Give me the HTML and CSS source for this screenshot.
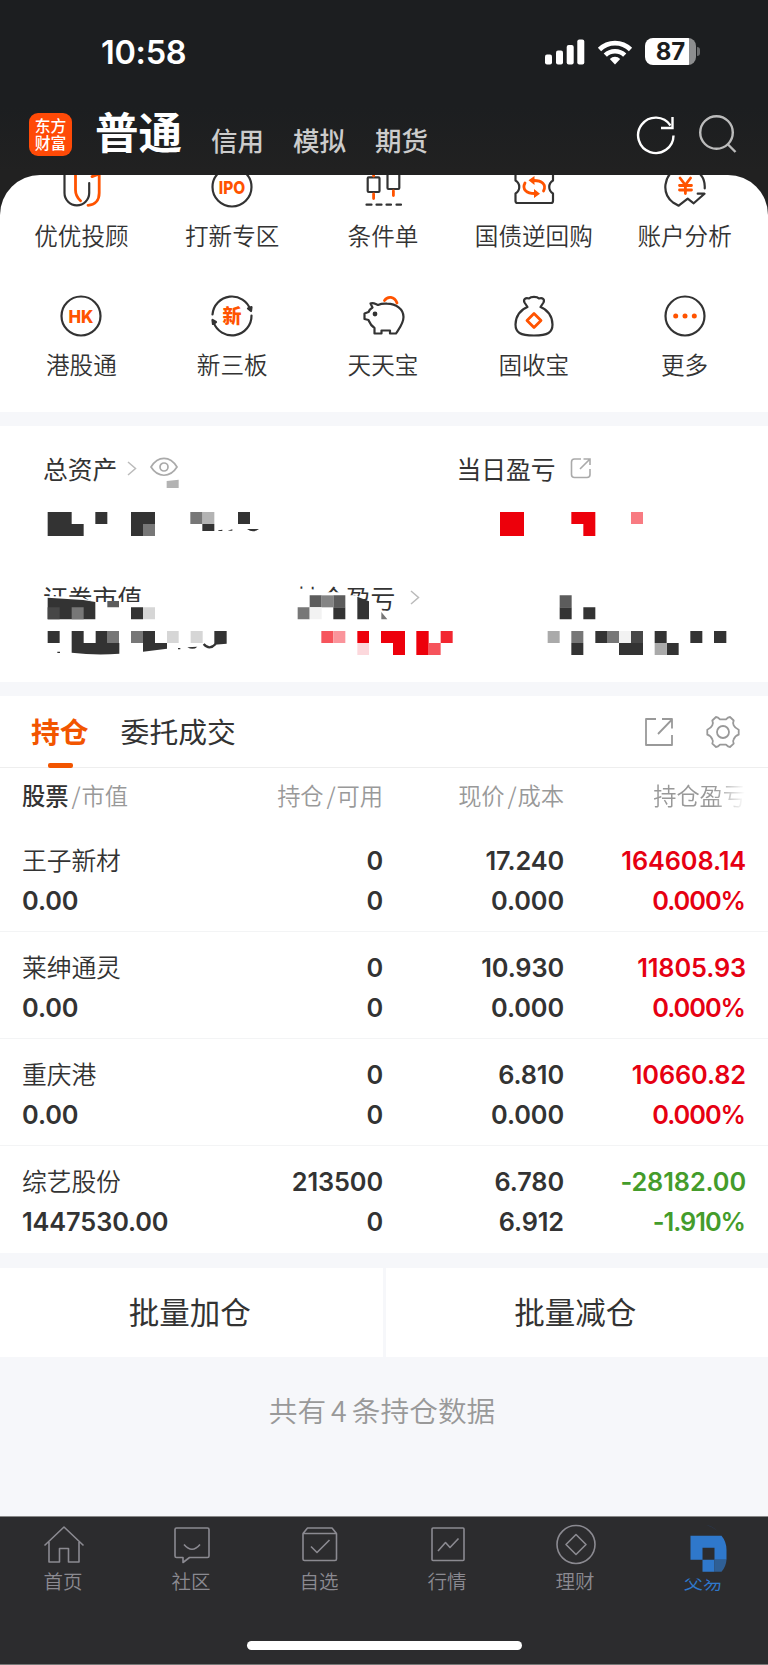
FILE: index.html
```html
<!DOCTYPE html>
<html lang="zh-CN">
<head>
    <meta charset="UTF-8">
    <title>交易</title>
    <link rel="stylesheet" href="styles.css">
</head>
<body>
<div id="app">
    <header>
        <div class="status">
            <span class="time">10:58</span>
            <svg class="signal" width="40" height="26" viewBox="0 0 40 26">
                <rect x="0" y="15.500" width="7" height="10" rx="2"/>
                <rect x="11" y="11.500" width="7" height="14" rx="2"/>
                <rect x="21.700" y="6" width="7" height="19.500" rx="2"/>
                <rect x="32.300" y="0.500" width="7" height="25" rx="2"/>
            </svg>
            <svg class="wifi" width="36" height="26" viewBox="0 0 36 26" stroke="#fff" stroke-width="4.600">
                <path d="M2.500 10.500a22 22 0 0 1 31 0"/>
                <path d="M8.300 16.200a13.800 13.800 0 0 1 19.400 0"/>
                <path d="M18 25.500l-5.200-5.600a7.500 7.500 0 0 1 10.400 0z" fill="#fff" stroke="none"/>
            </svg>
            <div class="battery"><span>87</span></div>
        </div>
        <div class="nav">
            <div class="logo"><span>东方</span><span>财富</span></div>
            <h1>普通</h1>
            <a>信用</a>
            <a>模拟</a>
            <a>期货</a>
            <svg class="refresh" width="42" height="42" viewBox="0 0 42 42" stroke="#fff" stroke-width="2.400">
                <path d="M38.500 22.500A17.700 17.700 0 1 1 35.500 12.500"/>
                <path d="M37.500 4v11H26"/>
            </svg>
            <svg class="search" width="42" height="42" viewBox="0 0 42 42" stroke="#bbb" stroke-width="2.400">
                <circle cx="19.500" cy="19.500" r="16.300"/>
                <path d="M30.500 31l8 8"/>
            </svg>
        </div>
    </header>

    <section class="menu">
        <div class="item">
            <svg viewBox="0 0 44 44">
                <path d="M5.500 0v28a12.300 12.300 0 0 0 24.700 0V18"/>
                <path class="o" d="M16.500 0v25c0 5 2 8 5 10.700M33 11.600l7.200-2.600v19c0 7-4 12-11.200 12.300"/>
            </svg>
            <p>优优投顾</p>
        </div>
        <div class="item">
            <svg viewBox="0 0 44 44">
                <circle cx="22" cy="22" r="19.500"/>
                <text x="22" y="28.600" font-size="18" textLength="26.500" lengthAdjust="spacingAndGlyphs">IPO</text>
            </svg>
            <p>打新专区</p>
        </div>
        <div class="item">
            <svg viewBox="0 0 44 44">
                <rect x="6.700" y="12.300" width="11.800" height="14.700" rx="1"/>
                <rect x="26.500" y="5" width="11.800" height="19" rx="1"/>
                <path d="M5.500 39.700h5M15.500 39.700h5M25.500 39.700h4.500M35.500 39.700h4.500"/>
                <path class="o" d="M12.600 8v3M12.600 29v4.500M32.400 26v4.500"/>
            </svg>
            <p>条件单</p>
        </div>
        <div class="item">
            <svg viewBox="0 0 44 44">
                <path d="M3.500 0v15.500c5 3 5 10 0 13V36q0 2 2 2h33.500q2 0 2-2v-7.500c-5-3-5-10 0-13V0"/>
                <path class="o" d="M13 18c-3.500 6.500 2 10.500 9.500 10.500M31.500 26c3.500-6.500-2-10.500-9.500-10.500"/>
                <path class="of" d="M22.500 11v9l-6-4.800zM22 24v9l6-4.300z"/>
            </svg>
            <p>国债逆回购</p>
        </div>
        <div class="item">
            <svg viewBox="0 0 44 44">
                <path d="M41.700 23.300A19.700 19.700 0 1 0 10 37.500L15.700 40.700 24.700 33.700 30.700 38.300 41.500 28.700H34.700"/>
                <path class="o" d="M17 13l5.300 7 5.300-7M16.500 20.500h12M16.500 25h12M22.400 20v8.500"/>
            </svg>
            <p>账户分析</p>
        </div>
        <div class="item">
            <svg viewBox="0 0 44 44">
                <circle cx="22" cy="22" r="19.500"/>
                <text x="22" y="28.500" font-size="18" textLength="25" lengthAdjust="spacingAndGlyphs">HK</text>
            </svg>
            <p>港股通</p>
        </div>
        <div class="item">
            <svg viewBox="0 0 44 44">
                <path d="M2.500 20.500A19.500 19.500 0 0 1 40.500 16M41.500 21.500A19.500 19.500 0 0 1 3.500 28"/>
                <path class="d" d="M38 14.500l3 2.500 .500-4zM2.500 26l.5 4 3-2z"/>
                <text x="22" y="28.800" font-size="19">新</text>
            </svg>
            <p>新三板</p>
        </div>
        <div class="item">
            <svg viewBox="0 0 44 44">
                <path d="M9.500 9.500c2.500-1.500 5 .5 7.500 1.500 3-1.300 6-1.600 9-1.300 9 .3 16.500 5 16.500 13.300 0 6.500-4 11-7.500 16.500h-6v-3H20.500v3h-7V34C9.500 31.500 9 29.500 7.500 26L3.500 25v-5.500L7.500 18c.8-2 1.700-3 4-4.500z"/>
                <circle class="d" cx="14" cy="20" r="1.300"/>
                <path class="o" d="M23.500 6.500c3-4.500 10-4.500 12.500 2.500"/>
            </svg>
            <p>天天宝</p>
        </div>
        <div class="item">
            <svg viewBox="0 0 44 44">
                <path d="M15.500 13L12.500 8.500C11 5 13.500 3.500 17 4.500c2-2.200 8-2.200 10 0 3.500-1 6 .5 4.500 4L28.500 13c7 2.500 12 9.500 12 17.500 0 8-4.500 11-18.500 11S3.500 38.500 3.500 30.500c0-8 5-15 12-17.500z"/>
                <path class="o" d="M22 19.500l7 7-7 7-7-7z"/>
            </svg>
            <p>固收宝</p>
        </div>
        <div class="item">
            <svg viewBox="0 0 44 44">
                <circle cx="22" cy="22" r="19.500"/>
                <g class="of"><circle cx="12.700" cy="22" r="2.500"/><circle cx="22" cy="22" r="2.500"/><circle cx="31.300" cy="22" r="2.500"/></g>
            </svg>
            <p>更多</p>
        </div>
    </section>

    <section class="assets">
        <div class="line top">
            <span>总资产</span>
            <svg class="arrow" width="10" height="15" viewBox="0 0 10 15"><path d="M1 1l7.500 6.500L1 14"/></svg>
            <svg class="eye" width="28" height="20" viewBox="0 0 28 20">
                <path d="M1 10C8-1.500 20-1.500 27 10 20 21 8 21 1 10z"/>
                <circle cx="14" cy="10" r="4"/>
            </svg>
            <span class="today">当日盈亏</span>
            <svg class="share" width="22" height="22" viewBox="0 0 22 22">
                <path d="M11 2H4.500Q1.500 2 1.500 5v12.500q0 3 3 3h12.500q3 0 3-3V12M10 12L20 2M13.500 2H20v6"/>
            </svg>
        </div>
        <div class="line bottom">
            <span>证券市值</span>
            <span class="hold">持仓盈亏</span>
            <svg class="arrow" width="10" height="15" viewBox="0 0 10 15"><path d="M1 1l7.500 6.500L1 14"/></svg>
        </div>
        <!-- 金额打码 -->
        <svg class="mosaic" width="768" height="250" viewBox="0 0 2304 750">
            <g fill="#fff">
                <path d="M130 498l110 3 45 15h150v70H130z"/>
                <path d="M840 476h80l60 6v5h55l10 9h25l30 20h30v60H840z"/>
                <path d="M1085 510l55 42v30h-55z"/>
            </g>
            <path fill="#b3b3b3" d="M500 153l36-4v25h-36zM607 246h36v36h-36z"/>
            <g fill="#333">
                <path d="M143 246h72v36h36v36H143zM286 246h36v36h-36zM393 246h72v36h-36v36h-36zM607 282h36v21h-36zM714 246h36v36h-36z"/>
                <path d="M655 301l12-2v4h-12zM683 302l14-4v4zM741 297h36q-18 14-36 0z"/>
                <path d="M143 503l107 7 36 6v52H143zM393 532h36v36h-36zM143 603h36v36h-36zM215 603h36v36h36v-36h36v36h35v32q-70 6-143-3zM429 603h36v36h36v17l-72 9zM643 603h37v38l-37 3zM172 665h8v4h-8zM534 654h7v4h-7zM562 652l30-2q-12 12-30 2z"/>
                <path d="M1000 532h36v36h-36zM1072 500l35 14v54h-35z"/>
                <path d="M1679 532h36v36h-36zM1750 532h36v36h-36zM1714 639h36v36h-36zM1786 603h36v36h-36zM1857 639h72v36h-72zM1964 603h36v36h36v36h-36v-36h-36zM2071 603h36v36h-36zM2142 603h37v36h-37z"/>
            </g>
            <path d="M611 642q17 20 36 0" fill="none" stroke="#333" stroke-width="7"/>
            <path fill="#777" d="M429 282h36v36h-36zM571 246h36v36h-36zM215 532h36v36h-36zM322 603h35v36h-35zM393 603h36v36h-36zM893 532h36v36h-36zM1144 546l18 22h-18zM1714 603h36v36h-36zM1821 603h36v36h-36z"/>
            <path fill="#5c5c5c" d="M322 513h35v19h-35zM929 496h36v36h-36zM1000 496h36v36h-36zM1679 496h36v36h-36z"/>
            <path fill="#848484" d="M965 496h35v36h-35z"/>
            <path fill="#474747" d="M143 532h36v36h-36zM1893 603h36v36h-36z"/>
            <path fill="#d6d6d6" d="M429 532h36v36h-36zM501 603h35v36h-35zM572 603h36v36h-36z"/>
            <path fill="#aaa" d="M1643 603h36v36h-36zM1964 639h36v36h-36z"/>
            <path fill="#f2f2f2" d="M929 532h36v36h-36zM1857 603h36v36h-36z"/>
            <path fill="#ed000b" d="M1500 246h72v72h-72zM1714 246h72v72h-36v-36h-36zM1072 603h35v36h-35zM1143 603h72v72h-36v-36h-36zM1249 603h37v72h-37z"/>
            <path fill="#f6545c" d="M964 603h36v36h-36zM1286 639h36v36h-36z"/>
            <path fill="#f22630" d="M1322 603h36v36h-36z"/>
            <path fill="#f87b82" d="M1893 246h36v36h-36z"/>
            <path fill="#fa949b" d="M1000 603h36v36h-36z"/>
            <path fill="#fcd8dc" d="M1072 639h35v36h-35z"/>
        </svg>
    </section>

    <section class="stocks">
        <div class="tabs">
            <span class="active">持仓</span>
            <span>委托成交</span>
            <svg class="export" width="30" height="30" viewBox="0 0 30 30">
                <path d="M12 2H2v26h26V18M14 17L28 2.500M18 2h10v9.500"/>
            </svg>
            <svg class="gear" width="34" height="34" viewBox="0 0 34 34">
                <path d="M10 2Q12 2 14 4.300H20Q22 2 24 2L27.700 5.500Q26.500 8 27.700 10.300 29 13 32.700 14.700V19.700Q29 21 27.700 24.300 26.500 26 27.700 28.700L24 32Q22 32 20 29.700H14Q12 32 10 32L6.300 28.700Q7.500 26 6.300 24.300 5 21 1.300 19.700V14.700Q5 13 6.300 10.300 7.500 8 6.300 5.500z"/>
                <circle cx="17" cy="17" r="6"/>
            </svg>
        </div>
        <div class="row head">
            <span><b>股票</b><i>/</i>市值</span>
            <span>持仓<i>/</i>可用</span>
            <span>现价<i>/</i>成本</span>
            <span class="fade">持仓盈亏</span>
        </div>
        <div class="row">
            <span class="name">王子新材</span><span>0</span><span>17.240</span><span class="red">164608.14</span>
            <span>0.00</span><span>0</span><span>0.000</span><span class="red pct">0.000%</span>
        </div>
        <div class="row">
            <span class="name">莱绅通灵</span><span>0</span><span>10.930</span><span class="red">11805.93</span>
            <span>0.00</span><span>0</span><span>0.000</span><span class="red pct">0.000%</span>
        </div>
        <div class="row">
            <span class="name">重庆港</span><span>0</span><span>6.810</span><span class="red">10660.82</span>
            <span>0.00</span><span>0</span><span>0.000</span><span class="red pct">0.000%</span>
        </div>
        <div class="row">
            <span class="name">综艺股份</span><span>213500</span><span>6.780</span><span class="green">-28182.00</span>
            <span>1447530.00</span><span>0</span><span>6.912</span><span class="green pct">-1.910%</span>
        </div>
    </section>

    <div class="batch">
        <div>批量加仓</div>
        <div>批量减仓</div>
    </div>
    <p class="total">共有<span>4</span>条持仓数据</p>

    <footer>
        <ul>
            <li>
                <svg viewBox="0 0 44 44"><path d="M2.500 22.500L22 4l19.500 18.500M7 19v20h10.500V25.500h9V39H37V19"/></svg>
                <span>首页</span>
            </li>
            <li>
                <svg viewBox="0 0 44 44"><path d="M6.500 5h31q1.500 0 1.500 1.500V33q0 1.500-1.500 1.500H19.500L13 39.500v-5H6.500Q5 34.500 5 33V6.500Q5 5 6.500 5zM14 21.500q8 9.500 16 0"/></svg>
                <span>社区</span>
            </li>
            <li>
                <svg viewBox="0 0 44 44"><path d="M5 10.500h33.500V36q0 1.500-1.500 1.500H6.500Q5 37.500 5 36zL9.500 5H34l4.500 5.500M13 23.500l6 6 12.500-12.500"/></svg>
                <span>自选</span>
            </li>
            <li>
                <svg viewBox="0 0 44 44"><path d="M7 5h30q1 0 1 1v30.500q0 1-1 1H7q-1 0-1-1V6q0-1 1-1zM12 28l7.500-8.500 4.500 5 8.500-9"/></svg>
                <span>行情</span>
            </li>
            <li>
                <svg viewBox="0 0 44 44"><circle cx="22" cy="21.500" r="19"/><path d="M22 11.500l10 10-10 10-10-10z"/></svg>
                <span>理财</span>
            </li>
            <li class="on">
                <svg viewBox="0 0 44 44">
                    <path fill="#2c2c2e" d="M0 45h38v13.500l-9 .500-5-3.500H0z"/>
                    <path fill="#2f78cb" d="M8.500 12.700h31q5 6 5 14v10h-12v-12h-12v12h12v12h-12v-12h-12z"/>
                    <path fill="#2f5f95" d="M32.500 36.700h12q-.500 7-5 12h-7z"/>
                    <path fill="#2b3a52" d="M24 2q7 1 11 6-4-4-11-6z"/>
                </svg>
                <span>交易</span>
            </li>
        </ul>
        <div class="bar"></div>
    </footer>
</div>
</body>
</html>
```

FILE: styles.css
```css
*{
    margin: 0;
    padding: 0;
    list-style: none;
    box-sizing: border-box;
}
body{
    background: #212121;
    font-family: "Noto Sans CJK SC", sans-serif;
    color: #333;
}
#app{
    width: 768px;
    height: 1665px;
    background: #f6f7fa;
    overflow: hidden;
}
svg{
    display: block;
    flex: none;
    fill: none;
}
header{
    height: 215px;
    background: linear-gradient(#1c1e20 50%, #212121 80%);
}
.status{
    height: 103px;
    padding: 0 72px 0 101px;
    display: flex;
    align-items: center;
    color: #fff;
}
.time{
    font: 600 32.5px/40px Inter, sans-serif;
    letter-spacing: -0.3px;
    margin-right: auto;
    padding-top: 2px;
}
.signal{
    margin-right: 12px;
    fill: #fff;
}
.wifi{
    margin-right: 12px;
}
.battery{
    position: relative;
    width: 51px;
    height: 27px;
    border-radius: 8px;
    background: linear-gradient(90deg, #fff 44px, #8d8e8f 44px);
    color: #1c1e20;
    text-align: center;
    font: 700 24px/27px Inter, sans-serif;
}
.battery:after{
    content: "";
    position: absolute;
    left: 52px;
    top: 9px;
    width: 3px;
    height: 9px;
    border-radius: 0 4px 4px 0;
    background: #6c6d6e;
}
.nav{
    height: 62px;
    padding-left: 29px;
    display: flex;
    align-items: center;
    color: #ccc;
}
.logo{
    width: 43px;
    height: 43px;
    border-radius: 9px;
    background: #ff4a07;
    color: #fff;
    font-size: 15.8px;
    padding-top: 4px;
    font-weight: 500;
    text-align: center;
}
.logo span{
    display: block;
    line-height: 17px;
}
.nav h1{
    margin: -6px 29px 0 23px;
    font-size: 43.5px;
    line-height: 60px;
    color: #fff;
}
.nav a{
    font-size: 26.5px;
    line-height: 40px;
    margin: 11px 29px 0 0;
    font-weight: 500;
}
.refresh{
    margin-left: auto;
    margin-right: 20px;
}
.search{
    margin-right: 29px;
}
.menu{
    height: 237px;
    margin-top: -40px;
    padding: 0 8px 0 6px;
    background: #fff;
    border-radius: 40px 40px 0 0;
    overflow: hidden;
    display: grid;
    grid-template-columns: repeat(5, 1fr);
    grid-auto-rows: 128.5px;
}
.item{
    margin-top: -10px;
    text-align: center;
}
.item svg{
    width: 44px;
    height: 44px;
    margin: 0 auto 11px;
    stroke: #333;
    stroke-width: 2.2;
    stroke-linejoin: round;
    stroke-linecap: round;
}
.item .o{
    stroke: #ff5300;
    stroke-width: 2.8;
}
.item .of{
    fill: #ff5300;
    stroke: none;
}
.item .d{
    fill: #333;
}
.item text{
    fill: #ff5300;
    stroke: none;
    text-anchor: middle;
    font-family: Inter, "Noto Sans CJK SC", sans-serif;
    font-weight: 800;
}
.item p{
    font-size: 23.6px;
    line-height: 30px;
    font-weight: 350;
}
.assets{
    position: relative;
    height: 256px;
    margin-top: 14px;
    padding: 23px 43px 0;
    background: #fff;
    font-size: 24.8px;
    line-height: 38px;
}
.line{
    display: flex;
    align-items: center;
    height: 38px;
}
.bottom{
    margin-top: 91px;
}
.arrow{
    margin-left: 10px;
    stroke: #bbb;
    stroke-width: 1.5;
}
.eye{
    margin: -2px 0 0 13px;
    stroke: #aaa;
    stroke-width: 1.7;
}
.share{
    margin-left: 14px;
    stroke: #aaa;
    stroke-width: 1.6;
}
.today{
    margin-left: 278px;
}
.hold{
    margin-left: 154px;
}
.bottom .arrow{
    margin-left: 15px;
}
.mosaic{
    position: absolute;
    left: 0;
    top: 4px;
}
.stocks{
    margin-top: 14px;
    background: #fff;
}
.tabs{
    height: 72px;
    padding: 0 28px 0 31px;
    border-bottom: 1px solid #eee;
    display: flex;
    align-items: center;
    font-size: 28.8px;
}
.tabs span{
    line-height: 70px;
    margin: -2px 32px 0 0;
}
.tabs .active{
    position: relative;
    color: #f25500;
    font-weight: bold;
}
.active:after{
    content: "";
    position: absolute;
    left: 17px;
    bottom: -2px;
    width: 25px;
    height: 5px;
    border-radius: 2px;
    background: #f25500;
}
.tabs svg{
    stroke: #999;
    stroke-width: 1.8;
    stroke-linejoin: round;
}
.export{
    margin-left: auto;
}
.gear{
    margin-left: 32px;
}
.row{
    height: 107px;
    padding: 15px 0 0 22px;
    border-bottom: 1px solid #f3f4f5;
    display: grid;
    grid-template-columns: 201px 160px 181px 182px;
    grid-auto-rows: 40px;
    text-align: right;
    font: 600 25.3px/41px Inter, "Noto Sans CJK SC", sans-serif;
    letter-spacing: -0.1px;
}
.row:last-child{
    border: 0;
}
.row span:nth-child(4n+1){
    text-align: left;
}
.row .name{
    font: 350 24.8px/39px "Noto Sans CJK SC", sans-serif;
}
.row .pct{
    letter-spacing: -1px;
    padding-right: 1px;
}
.head{
    height: 57px;
    padding-top: 7px;
    border: 0;
    color: #999;
    font: 350 23.3px/40px "Noto Sans CJK SC", sans-serif;
}
.head b{
    font-weight: 500;
    color: #333;
}
.head i{
    font-style: normal;
    margin: 0 1px 0 3px;
}
.head .fade{
    -webkit-mask-image: linear-gradient(90deg, #000 150px, transparent 181px);
    mask-image: linear-gradient(90deg, #000 150px, transparent 181px);
}
.red{
    color: #e60012;
}
.green{
    color: #449c2b;
}
.batch{
    margin-top: 15px;
    display: flex;
    gap: 3px;
}
.batch div{
    flex: 1;
    height: 89px;
    line-height: 87px;
    padding-right: 3px;
    background: #fff;
    text-align: center;
    font-size: 30.5px;
}
.total{
    height: 159px;
    padding: 31px 4px 0 0;
    line-height: 44px;
    text-align: center;
    font-size: 28.7px;
    color: #999;
    font-weight: 350;
}
.total span{
    margin: 0 5px;
}
footer{
    height: 149px;
    background: #2c2c2e;
    border-top: 1px solid #888;
    border-bottom: 1px solid #777;
}
footer ul{
    display: flex;
    height: 124px;
}
footer li{
    flex: 1;
    padding-top: 6px;
    text-align: center;
    color: #8b8a91;
    font-size: 19.5px;
    line-height: 28px;
    font-weight: 350;
}
footer li span{
    margin-right: 2px;
}
footer li svg{
    position: relative;
    z-index: 1;
    width: 44px;
    height: 44px;
    margin: 0 auto;
    stroke: #8b8a91;
    stroke-width: 1.6;
    stroke-linejoin: round;
}
footer .on{
    color: #2f78cb;
}
footer .on svg{
    stroke: none;
    overflow: visible;
}
.bar{
    width: 275px;
    height: 9px;
    margin: 0 auto;
    border-radius: 5px;
    background: #fff;
}
```
